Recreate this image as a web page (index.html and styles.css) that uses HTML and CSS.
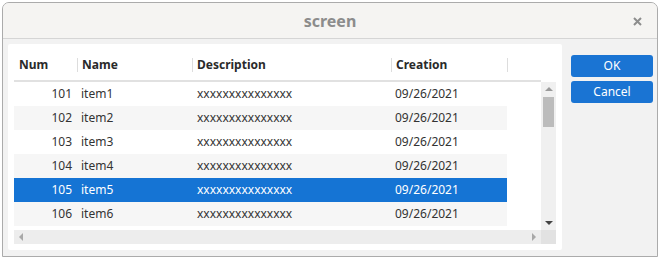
FILE: index.html
```html
<!DOCTYPE html>
<html>
<head>
<meta charset="utf-8">
<link rel="stylesheet" href="styles.css">
</head>
<body>
<div class="window">
  <div class="titlebar">
    <span></span>
    <span class="title">screen</span>
    <span class="close"><svg width="9" height="9" viewBox="0 0 9 9"><path d="M1 1L8 8M8 1L1 8" stroke="#8d8d8d" stroke-width="2"/></svg></span>
  </div>
  <div class="content">
    <div class="panel">
      <div class="table">
        <div class="head">
          <div class="hcell first">Num</div>
          <div class="hcell"><i class="sep"></i>Name</div>
          <div class="hcell"><i class="sep"></i>Description</div>
          <div class="hcell"><i class="sep"></i>Creation</div>
          <div class="hcell"><i class="sep"></i></div>
        </div>
        <div class="hblank"></div>
        <div class="rows">
          <div class="row"><span class="num">101</span><span>item1</span><span>xxxxxxxxxxxxxxx</span><span>09/26/2021</span></div>
          <div class="row alt"><span class="num">102</span><span>item2</span><span>xxxxxxxxxxxxxxx</span><span>09/26/2021</span></div>
          <div class="row"><span class="num">103</span><span>item3</span><span>xxxxxxxxxxxxxxx</span><span>09/26/2021</span></div>
          <div class="row alt"><span class="num">104</span><span>item4</span><span>xxxxxxxxxxxxxxx</span><span>09/26/2021</span></div>
          <div class="row sel"><span class="num">105</span><span>item5</span><span>xxxxxxxxxxxxxxx</span><span>09/26/2021</span></div>
          <div class="row alt"><span class="num">106</span><span>item6</span><span>xxxxxxxxxxxxxxx</span><span>09/26/2021</span></div>
        </div>
        <div class="vscroll">
          <div class="arrowbox"><i class="tri up"></i></div>
          <div class="thumb"></div>
          <div class="spacer"></div>
          <div class="arrowbox"><i class="tri down"></i></div>
        </div>
        <div class="hscroll">
          <div class="arrowbox"><i class="tri left"></i></div>
          <div class="spacer"></div>
          <div class="arrowbox"><i class="tri right"></i></div>
        </div>
        <div class="corner"></div>
      </div>
    </div>
    <div class="buttons">
      <div class="btn">OK</div>
      <div class="btn">Cancel</div>
    </div>
  </div>
</div>
</body>
</html>
```
FILE: styles.css
```css
html, body {
  margin: 0;
  padding: 0;
  background: #ffffff;
  font-family: "Noto Sans", "Open Sans", sans-serif;
}
.window {
  margin: 2px 0 0 2px;
  width: 656px;
  height: 255px;
  box-sizing: border-box;
  border: 1px solid #ababab;
  border-radius: 7px 7px 0 0;
  background: #f2f2f2;
  display: flex;
  flex-direction: column;
  overflow: hidden;
}
.titlebar {
  height: 35px;
  flex: none;
  background: #f5f4f2;
  border-bottom: 1px solid #d5d5d5;
  display: grid;
  grid-template-columns: 1fr auto 1fr;
  align-items: center;
}
.title {
  font-size: 16px;
  font-weight: bold;
  color: #8c8c8c;
  line-height: 20px;
}
.close {
  justify-self: end;
  margin-right: 15px;
  display: flex;
  margin-top: 1px;
}
.content {
  display: flex;
  padding: 5px 4px 0 5px;
  gap: 9px;
}
.panel {
  width: 554px;
  height: 206px;
  box-sizing: border-box;
  background: #ffffff;
  padding: 6px;
  border-radius: 2px;
}
.table {
  display: grid;
  grid-template-columns: 527px 15px;
  grid-template-rows: 32px 148px 14px;
  font-size: 12px;
  color: #333333;
}
.head {
  display: grid;
  grid-template-columns: 63px 115px 199px 116px 34px;
  border-bottom: 2px solid #e1e1e1;
  box-sizing: border-box;
}
.hcell {
  display: flex;
  align-items: center;
  font-weight: bold;
  color: #2a2a2a;
  padding-bottom: 1px;
}
.hcell.first {
  padding-left: 5px;
}
.sep {
  display: inline-block;
  width: 1px;
  height: 14px;
  background: #dddddd;
  margin-right: 4px;
}
.rows {
  display: flex;
  flex-direction: column;
}
.row {
  display: grid;
  grid-template-columns: 63px 115px 199px 116px;
  width: 493px;
  height: 24px;
  line-height: 24px;
}
.row span {
  padding-left: 4px;
  white-space: nowrap;
}
.row span:nth-child(3) {
  padding-left: 5px;
}
.row .num {
  text-align: right;
  padding-left: 0;
  padding-right: 5px;
}
.row.alt {
  background: #f6f6f6;
}
.row.sel {
  background: #1574d4;
  color: #ffffff;
}
.vscroll {
  background: #f0f0f0;
  display: flex;
  flex-direction: column;
  align-items: center;
}
.arrowbox {
  width: 14px;
  height: 14px;
  display: flex;
  align-items: center;
  justify-content: center;
  flex: none;
}
.thumb {
  width: 11px;
  height: 30px;
  background: #bcbcbc;
  margin-top: 1px;
}
.spacer {
  flex: 1;
}
.hscroll {
  background: #ededed;
  display: flex;
}
.corner {
  background: #e2e2e2;
}
.tri {
  width: 0;
  height: 0;
  display: block;
}
.tri.up {
  border-left: 4px solid transparent;
  border-right: 4px solid transparent;
  border-bottom: 4px solid #9a9a9a;
}
.tri.down {
  border-left: 4px solid transparent;
  border-right: 4px solid transparent;
  border-top: 4px solid #444444;
}
.tri.left {
  border-top: 4px solid transparent;
  border-bottom: 4px solid transparent;
  border-right: 4px solid #a8a8a8;
}
.tri.right {
  border-top: 4px solid transparent;
  border-bottom: 4px solid transparent;
  border-left: 4px solid #a8a8a8;
}
.buttons {
  width: 82px;
  margin-top: 11px;
  display: flex;
  flex-direction: column;
  gap: 4px;
}
.btn {
  height: 22px;
  line-height: 22px;
  background: #1a74d3;
  color: #ffffff;
  border-radius: 3px;
  text-align: center;
  font-size: 12px;
}
```
